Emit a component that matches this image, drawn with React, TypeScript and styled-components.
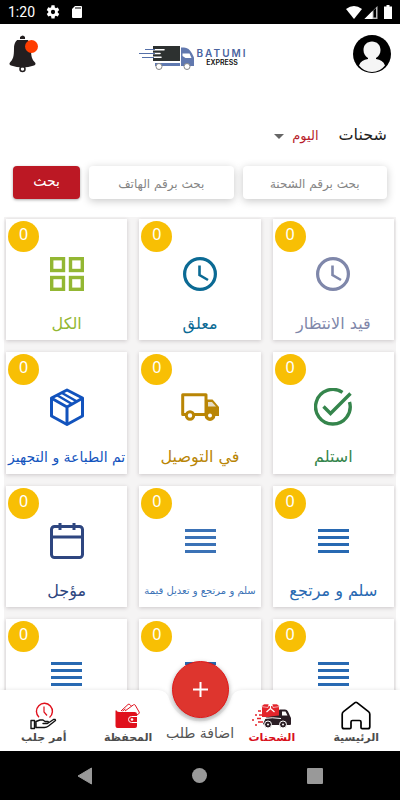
import React from "react";
import styled, { createGlobalStyle } from "styled-components";

const GlobalStyle = createGlobalStyle`
  *, *::before, *::after { box-sizing: border-box; }
  body { margin: 0; background: #fff; font-family: "DejaVu Sans", sans-serif; }
  button, input, select { font: inherit; color: inherit; }
  button { border: 0; padding: 0; background: none; cursor: pointer; }
  svg { display: block; flex: none; }
`;

const Screen = styled.div`
  display: flex;
  flex-direction: column;
  height: 100vh;
  overflow: hidden;
  background: #fff;
`;

/* ---------- status bar ---------- */

const StatusBar = styled.div`
  direction: ltr;
  flex: none;
  display: flex;
  align-items: center;
  justify-content: space-between;
  height: 24px;
  padding: 0 8px;
  background: #000;
  color: #fff;
  font: 14px/24px Roboto, sans-serif;
`;

const StatusGroup = styled.div<{ $gap: number }>`
  display: flex;
  align-items: center;
  gap: ${(p) => p.$gap}px;
`;

/* ---------- header ---------- */

const Header = styled.header`
  flex: none;
  display: flex;
  align-items: center;
  justify-content: space-between;
  padding: 10px 9px;
`;

const IconButton = styled.button`
  display: flex;
  align-items: center;
  justify-content: center;
  height: 40px;
`;

const Logo = styled.div`
  direction: ltr;
  display: flex;
  align-items: center;
  gap: 2px;
  padding: 6px 6px 0 0;
`;

const LogoText = styled.div`
  display: flex;
  flex-direction: column;
  align-items: center;
  font-family: Inter, sans-serif;
`;

const LogoName = styled.span`
  color: #4a639f;
  font-size: 10px;
  font-weight: 600;
  line-height: 10px;
  letter-spacing: 2px;
`;

const LogoSub = styled.span`
  color: #111;
  font-size: 7px;
  font-weight: 600;
  line-height: 9px;
`;

/* ---------- content ---------- */

const Main = styled.main`
  flex: 1;
  min-height: 0;
  overflow-y: auto;
  scrollbar-width: none;
`;

const FilterRow = styled.div`
  display: flex;
  align-items: center;
  gap: 20px;
  padding: 38px 13px 0;
`;

const Title = styled.label`
  color: #222;
  font-size: 16px;
  line-height: 24px;
`;

const SelectWrap = styled.div`
  display: flex;
  align-items: center;
  gap: 8px;
  padding-top: 2px;
`;

const DaySelect = styled.select`
  appearance: none;
  border: 0;
  padding: 0;
  background: none;
  color: #b71c2a;
  font-size: 13px;
  line-height: 24px;
`;

const SearchForm = styled.form`
  display: flex;
  gap: 9px;
  padding: 18px 13px;
`;

const SearchInput = styled.input`
  flex: 1;
  min-width: 0;
  height: 33px;
  border: 0;
  border-radius: 4px;
  padding: 3px 8px 0;
  background: #fff;
  box-shadow: 0 2px 9px rgba(0, 0, 0, 0.22);
  font-size: 12px;
  text-align: center;
  &::placeholder { color: #858585; opacity: 1; }
`;

const SearchButton = styled.button`
  width: 67px;
  height: 33px;
  border-radius: 4px;
  padding-bottom: 4px;
  background: #bc1824;
  box-shadow: 0 1px 3px rgba(0, 0, 0, 0.35);
  color: #fff;
  font-size: 14px;
`;

const CardGrid = styled.div`
  display: grid;
  grid-template-columns: repeat(3, minmax(0, 1fr));
  gap: 12px;
  margin: 0 4px;
  padding: 2px 2px 70px;
  background: #f5f4f4;
`;

const Card = styled.button<{ $color: string }>`
  position: relative;
  display: flex;
  flex-direction: column;
  align-items: center;
  justify-content: flex-start;
  aspect-ratio: 1;
  min-width: 0;
  padding-top: 35px;
  background: #fff;
  box-shadow: 0 1px 4px rgba(60, 40, 50, 0.22);
  color: ${(p) => p.$color};
`;

const CardIcon = styled.span`
  display: flex;
  align-items: center;
  justify-content: center;
  height: 40px;
`;

const CardLabel = styled.span<{ $size: number }>`
  margin-top: 18px;
  font-size: ${(p) => p.$size}px;
  line-height: 24px;
  white-space: nowrap;
`;

const Badge = styled.span`
  position: absolute;
  top: 2px;
  left: 2px;
  width: 31px;
  height: 31px;
  border-radius: 50%;
  background: #f8bf04;
  color: #fff;
  font: 16px/26px "Noto Sans", sans-serif;
  text-align: center;
`;

/* ---------- bottom navigation ---------- */

const BottomNav = styled.nav`
  position: relative;
  flex: none;
  display: grid;
  grid-template-columns: 14fr 13fr 10fr 13fr 14fr;
  justify-items: center;
  align-items: start;
  height: 61px;
  margin-top: -61px;
`;

const NavBackdrop = styled.div`
  position: absolute;
  inset: 0;
  display: flex;
  filter: drop-shadow(0 0 2px rgba(0, 0, 0, 0.1));
`;

const NavSide = styled.div`
  flex: 1;
  background: #fff;
`;

const NavItem = styled.a<{ $active?: boolean }>`
  position: relative;
  display: flex;
  flex-direction: column;
  align-items: center;
  padding-top: 11px;
  color: ${(p) => (p.$active ? "#d8101c" : "#4d4d4d")};
  font-size: 11px;
  font-weight: bold;
  line-height: 16px;
  text-decoration: none;
  white-space: nowrap;
`;

const NavIcon = styled.span`
  display: flex;
  align-items: center;
  justify-content: center;
  height: 29px;
`;

const AddButton = styled.button`
  position: relative;
  display: flex;
  flex-direction: column;
  align-items: center;
  gap: 6px;
  margin: -29px -8px 0;
  color: #555;
  font-size: 14px;
  line-height: 18px;
  white-space: nowrap;
`;

const AddCircle = styled.span`
  display: flex;
  align-items: center;
  justify-content: center;
  width: 57px;
  height: 57px;
  border: 1px solid #e01818;
  border-radius: 50%;
  background: #de352e;
  box-shadow: 0 2px 5px rgba(0, 0, 0, 0.35);
`;

const SystemBar = styled.div`
  direction: ltr;
  position: relative;
  flex: none;
  display: grid;
  grid-template-columns: repeat(3, 1fr);
  height: 49px;
  padding: 0 27px;
  background: #000;
`;

const SystemButton = styled.button`
  display: flex;
  align-items: center;
  justify-content: center;
`;

/* ---------- drawings ---------- */

const GearIcon = () => (
  <svg width="16" height="16" viewBox="0 0 24 24" fill="#fff">
    <path d="M19.14 12.94c.04-.3.06-.61.06-.94s-.02-.64-.07-.94l2.03-1.58a.49.49 0 0 0 .12-.61l-1.92-3.32a.49.49 0 0 0-.59-.22l-2.39.96a7 7 0 0 0-1.62-.94l-.36-2.54A.48.48 0 0 0 13.92 2h-3.84a.48.48 0 0 0-.47.41l-.36 2.54c-.59.24-1.13.57-1.62.94l-2.39-.96a.48.48 0 0 0-.59.22L2.74 8.87a.48.48 0 0 0 .12.61l2.03 1.58a6.8 6.8 0 0 0 0 1.88l-2.03 1.58a.49.49 0 0 0-.12.61l1.92 3.32c.12.22.37.29.59.22l2.39-.96c.5.38 1.03.7 1.62.94l.36 2.54c.05.24.24.41.48.41h3.84c.24 0 .44-.17.47-.41l.36-2.54a7 7 0 0 0 1.62-.94l2.39.96c.22.08.47 0 .59-.22l1.92-3.32a.48.48 0 0 0-.12-.61zM12 15.2a3.2 3.2 0 1 1 0-6.4 3.2 3.2 0 0 1 0 6.4z" />
  </svg>
);

const SdIcon = () => (
  <svg width="12" height="14" viewBox="0 0 12 14">
    <path d="M4 1h6q1 0 1 1v10q0 1-1 1H2q-1 0-1-1V4z" fill="#fff" />
    <path d="M5 2v2M7 2v2M9 2v2" stroke="#000" />
  </svg>
);

const WifiIcon = () => (
  <svg width="16" height="13" viewBox="0 0 16 13">
    <path d="M8 13 0 3Q8-3 16 3z" fill="#fff" />
  </svg>
);

const SignalIcon = () => (
  <svg width="14" height="13" viewBox="0 0 14 13">
    <path d="M13.500 0v13H.5z" fill="#bbb" />
    <path d="M9.500 4.500 12 2v9.500H9.500z" fill="#000" />
    <path d="M8.500 5v8H.5z" fill="#fff" />
  </svg>
);

const BatteryIcon = () => (
  <svg width="8" height="14" viewBox="0 0 8 14">
    <path d="M2.500 0h3v1.500H8V14H0V1.500h2.500z" fill="#fff" />
  </svg>
);

const BellIcon = () => (
  <svg width="30" height="38" viewBox="0 0 30 38">
    <path d="M11 5V2q3-3 5 0v3" fill="#231f20" />
    <circle cx="13.500" cy="34" r="2.500" fill="none" stroke="#231f20" strokeWidth="1.500" />
    <path d="M13.500 3.500c6 0 8.500 4 8.500 10 0 8 1 11 4 14 1 1 .5 2.500-1 3q-11.500 4-23 0c-1.500-.5-2-2-1-3 3-3 4-6 4-14 0-6 2.500-10 8.500-10z" fill="#231f20" />
    <path d="M8 4.500h11" stroke="#fff" strokeWidth="1" />
    <circle cx="22.500" cy="11.500" r="6.500" fill="#ff3d00" />
  </svg>
);

const LogoTruck = () => (
  <svg width="56" height="25" viewBox="0 0 56 25">
    <path d="M14 1h27v15H14z" fill="#2d3130" />
    <path d="M13 4.700h12M13 8.500h8M13 12.300h9" stroke="#fff" strokeWidth="1.600" strokeLinecap="round" />
    <path d="M6 4.500h10M0 8.500h16M3 12.500h12" stroke="#5570a8" strokeWidth="1" />
    <path d="M16 18h25v3H16z" fill="#5f79b0" />
    <path d="M42 2.500h3q5 0 8 6l2 4v8.500H42z" fill="#6178ae" />
    <path d="M43.500 8.500h7l2 4.500h-6l-3-2z" fill="#fff" />
    <circle cx="20" cy="21.500" r="3" fill="#fff" stroke="#888" />
    <circle cx="48" cy="21.500" r="3" fill="#fff" stroke="#888" />
  </svg>
);

const AvatarIcon = () => (
  <svg width="38" height="38" viewBox="0 0 38 38">
    <circle cx="19" cy="19" r="19" fill="#000" />
    <path d="M19 6.500c5 0 8.500 3.500 8.500 8.500 0 3.500-1.500 6-4.500 8v1c4.500.5 7.500 2.500 9 6.500Q27 37 19 37T6 30.500c1.500-4 4.500-6 9-6.500v-1c-3-2-4.500-4.500-4.500-8 0-5 3.500-8.500 8.500-8.500z" fill="#f5f5f5" />
  </svg>
);

const CaretIcon = () => (
  <svg width="10" height="5" viewBox="0 0 10 5">
    <path d="M0 0h10L5 5z" fill="#666" />
  </svg>
);

const SquaresIcon = () => (
  <svg width="34" height="34" viewBox="0 0 34 34" fill="none" stroke="currentColor" strokeWidth="3.400">
    <rect x="1.700" y="1.700" width="11.800" height="11.800" />
    <rect x="20.500" y="1.700" width="11.800" height="11.800" />
    <rect x="1.700" y="20.500" width="11.800" height="11.800" />
    <rect x="20.500" y="20.500" width="11.800" height="11.800" />
  </svg>
);

const ClockIcon = () => (
  <svg width="34" height="34" viewBox="0 0 34 34" fill="none" stroke="currentColor">
    <circle cx="17" cy="17" r="15.400" strokeWidth="3.200" />
    <path d="M16.500 8.500v9.500l8.500 5" strokeWidth="2.600" />
  </svg>
);

const CheckIcon = () => (
  <svg width="38" height="38" viewBox="0 0 38 38" fill="none" stroke="currentColor">
    <path d="M28.500 4.400A17.300 17.300 0 1 0 35.500 14" strokeWidth="3.400" />
    <path d="M9.500 18.500 16.500 25.500 36.500 5.500" strokeWidth="3.400" />
  </svg>
);

const TruckIcon = () => (
  <svg width="38" height="28" viewBox="0 0 38 28">
    <path d="M5 21.500H1.700V1.700H25v19.800H13" fill="none" stroke="currentColor" strokeWidth="3" strokeLinejoin="round" />
    <path d="M25 6.500h6.500L38 14v9H25z" fill="currentColor" />
    <path d="M27 9h4l4 4.500h-8z" fill="#e6dcc4" />
    <circle cx="9" cy="22.500" r="3.700" fill="#fff" stroke="currentColor" strokeWidth="3" />
    <circle cx="29" cy="22.500" r="3.700" fill="#fff" stroke="currentColor" strokeWidth="3.400" />
  </svg>
);

const BoxIcon = () => (
  <svg width="34" height="38" viewBox="0 0 34 38" fill="none" stroke="currentColor" strokeWidth="3" strokeLinejoin="round">
    <path d="M17 2 32.500 10v18L17 36.500 1.500 28V10z" />
    <path d="M2 10.500 17 19l15-8.500M17 19v17" />
    <path d="M7.500 7.500 22 16M12 5l15 8.500" strokeWidth="2.500" />
  </svg>
);

const CalendarIcon = () => (
  <svg width="34" height="36" viewBox="0 0 34 36" fill="none" stroke="currentColor" strokeWidth="3">
    <rect x="1.500" y="3.500" width="31" height="31" rx="3" />
    <path d="M2 14h30M10 0v7M24 0v7" />
  </svg>
);

const LinesIcon = () => (
  <svg width="31" height="24" viewBox="0 0 31 24" stroke="currentColor" strokeWidth="3">
    <path d="M0 1.500h31M0 8.500h31M0 15.500h31M0 22.500h31" />
  </svg>
);

const HomeIcon = () => (
  <svg width="30" height="29" viewBox="0 0 30 29" fill="none" stroke="#000" strokeWidth="1.700" strokeLinejoin="round">
    <path d="M14 1.700q1-.8 2 0l11.500 9q1.300 1 1.300 2.500v12.500q0 2-2 2h-5.600q-1.200 0-1.200-1.200V21q0-1.500-1.500-1.500h-7Q10 19.500 10 21v5.500q0 1.200-1.200 1.200H3.200q-2 0-2-2V13.200q0-1.500 1.300-2.500z" />
  </svg>
);

const DeliveryIcon = () => (
  <svg width="40" height="26" viewBox="0 0 40 26">
    <path d="M10 3h17v11H10z" fill="#e3242b" />
    <path d="M9 3.500 12 1h5l-1 3.500zM28 3.500 25 1h-5l1 3.500z" fill="#e3242b" stroke="#fff" strokeWidth=".6" />
    <path d="M18.500 1v4.500l-4 3.500M18.500 5.500l4 3.500" stroke="#fff" strokeWidth="1.200" fill="none" />
    <path d="M14 14.500q6-1.500 13-2V7.500q0-1 1-1h5q2 0 3 2l2 4.500 1 2v6q0 1-1 1H14q-2 0-3-1z" fill="#2a1d24" />
    <path d="M30 8.500h3.500l2 4H30z" fill="#fff" />
    <path d="M12 15.500Q20 14 29 15.500" stroke="#fff" strokeWidth="1" fill="none" />
    <circle cx="16" cy="21.500" r="3.500" fill="#2a1d24" stroke="#fff" />
    <circle cx="31" cy="21.500" r="3.500" fill="#2a1d24" stroke="#fff" />
    <circle cx="16" cy="21.500" r="1" fill="#fff" />
    <circle cx="31" cy="21.500" r="1" fill="#fff" />
    <path d="M6 8h3M3 12h2M7 12h5M5 15.500h4M0 17h2M6 19h5M3 22h2" stroke="#e3242b" strokeWidth="1.500" />
  </svg>
);

const WalletIcon = () => (
  <svg width="26" height="25" viewBox="0 0 26 25">
    <path d="M6 8 13 1.500q1-.8 1.800 0l1.500 1.500M10 8l8.500-6.200q1-.6 1.700.3l4 7q.5 1-.5 1.700L22 12M7.500 8l3-2" fill="none" stroke="#e0101c" strokeWidth="1" />
    <path d="M1 7Q2 9 4 9h15.500Q22 9 22 11v12q0 2-2 2H2.500q-2 0-2-2V8z" fill="#e0101c" />
    <path d="M22.500 13.500h-6a3 3 0 0 0 0 6h6" fill="none" stroke="#fff" strokeWidth="1" />
    <circle cx="17" cy="16.500" r="1.300" fill="#fff" />
  </svg>
);

const PickupIcon = () => (
  <svg width="28" height="28" viewBox="0 0 28 28" fill="none">
    <path d="M9 15.200a8 8 0 1 1 10.500.3" stroke="#e0101c" strokeWidth="1.400" />
    <path d="M14 4.500v5.500l3 3.500" stroke="#e0101c" strokeWidth="1.200" />
    <path d="M1 18.500h3.500v8H1zM6 19.500l4-1.500h3l2 1.500h3q1 1.500-1 2h-4 4.500l6-4q2-.5 2 1l-7 5.500q-2 1.500-4 1.500H6z" stroke="#111" strokeWidth="1.400" strokeLinejoin="round" />
  </svg>
);

const PlusIcon = () => (
  <svg width="15" height="15" viewBox="0 0 15 15" stroke="#fff" strokeWidth="2">
    <path d="M0 7.500h15M7.500 0v15" />
  </svg>
);

const NotchShape = () => (
  <svg width="100" height="61" viewBox="0 0 100 61">
    <path d="M0 0h8q9 0 11.500 10a32.500 32.500 0 0 0 61 0Q83 0 92 0h8v61H0z" fill="#fff" />
  </svg>
);

/* ---------- data ---------- */

type CardData = { id: string; label?: string; color: string; size: number; icon: React.ReactNode };

const cards: CardData[] = [
  { id: "waiting", label: "قيد الانتظار", color: "#7f87aa", size: 16, icon: <ClockIcon /> },
  { id: "pending", label: "معلق", color: "#0b6a94", size: 16, icon: <ClockIcon /> },
  { id: "all", label: "الكل", color: "#93b733", size: 16, icon: <SquaresIcon /> },
  { id: "received", label: "استلم", color: "#35854c", size: 16, icon: <CheckIcon /> },
  { id: "delivering", label: "في التوصيل", color: "#b98505", size: 16, icon: <TruckIcon /> },
  { id: "printed", label: "تم الطباعة و التجهيز", color: "#1253bd", size: 14, icon: <BoxIcon /> },
  { id: "returned", label: "سلم و مرتجع", color: "#2869b2", size: 16, icon: <LinesIcon /> },
  { id: "repriced", label: "سلم و مرتجع و تعديل قيمة", color: "#3b72b6", size: 10, icon: <LinesIcon /> },
  { id: "postponed", label: "مؤجل", color: "#2e4680", size: 16, icon: <CalendarIcon /> },
  { id: "extra-1", color: "#2869b2", size: 16, icon: <LinesIcon /> },
  { id: "extra-2", color: "#2869b2", size: 16, icon: <LinesIcon /> },
  { id: "extra-3", color: "#2869b2", size: 16, icon: <LinesIcon /> },
];

export default function App() {
  return (
    <Screen dir="rtl" lang="ar">
      <GlobalStyle />
      <StatusBar>
        <StatusGroup $gap={10}>
          <span>1:20</span>
          <GearIcon />
          <SdIcon />
        </StatusGroup>
        <StatusGroup $gap={2}>
          <WifiIcon />
          <StatusGroup $gap={6}>
            <SignalIcon />
            <BatteryIcon />
          </StatusGroup>
        </StatusGroup>
      </StatusBar>

      <Header>
        <IconButton type="button" aria-label="الحساب"><AvatarIcon /></IconButton>
        <Logo>
          <LogoTruck />
          <LogoText>
            <LogoName>BATUMI</LogoName>
            <LogoSub>EXPRESS</LogoSub>
          </LogoText>
        </Logo>
        <IconButton type="button" aria-label="الإشعارات"><BellIcon /></IconButton>
      </Header>

      <Main>
        <FilterRow>
          <Title htmlFor="day">شحنات</Title>
          <SelectWrap>
            <DaySelect id="day" defaultValue="today">
              <option value="today">اليوم</option>
            </DaySelect>
            <CaretIcon />
          </SelectWrap>
        </FilterRow>

        <SearchForm onSubmit={(e) => e.preventDefault()}>
          <SearchInput aria-label="بحث برقم الشحنة" placeholder="بحث برقم الشحنة" />
          <SearchInput aria-label="بحث برقم الهاتف" placeholder="بحث برقم الهاتف" />
          <SearchButton type="submit">بحث</SearchButton>
        </SearchForm>

        <CardGrid>
          {cards.map((c) => (
            <Card key={c.id} type="button" $color={c.color}>
              <Badge>0</Badge>
              <CardIcon>{c.icon}</CardIcon>
              {c.label && <CardLabel $size={c.size}>{c.label}</CardLabel>}
            </Card>
          ))}
        </CardGrid>
      </Main>

      <BottomNav>
        <NavBackdrop>
          <NavSide />
          <NotchShape />
          <NavSide />
        </NavBackdrop>
        <NavItem href="#home"><NavIcon><HomeIcon /></NavIcon>الرئيسية</NavItem>
        <NavItem href="#shipments" $active><NavIcon><DeliveryIcon /></NavIcon>الشحنات</NavItem>
        <AddButton type="button">
          <AddCircle><PlusIcon /></AddCircle>
          اضافة طلب
        </AddButton>
        <NavItem href="#wallet"><NavIcon><WalletIcon /></NavIcon>المحفظة</NavItem>
        <NavItem href="#pickup"><NavIcon><PickupIcon /></NavIcon>أمر جلب</NavItem>
      </BottomNav>

      <SystemBar>
        <SystemButton type="button" aria-label="Back">
          <svg width="16" height="18" viewBox="0 0 16 18"><path d="M14.500 1v16L1 9z" fill="#999" stroke="#999" strokeLinejoin="round" /></svg>
        </SystemButton>
        <SystemButton type="button" aria-label="Home">
          <svg width="15" height="15" viewBox="0 0 15 15"><circle cx="7.500" cy="7.500" r="7.500" fill="#999" /></svg>
        </SystemButton>
        <SystemButton type="button" aria-label="Recent apps">
          <svg width="16" height="16" viewBox="0 0 16 16"><rect width="16" height="16" rx="1" fill="#999" /></svg>
        </SystemButton>
      </SystemBar>
    </Screen>
  );
}
